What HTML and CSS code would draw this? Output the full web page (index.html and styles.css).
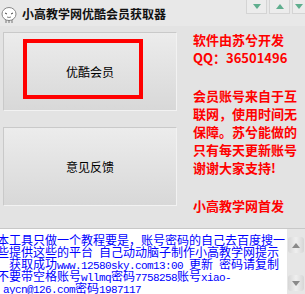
FILE: index.html
```html
<!DOCTYPE html>
<html>
<head>
<meta charset="utf-8">
<link rel="stylesheet" href="styles.css">
</head>
<body>
<div class="win">
  <div class="titlebar">
    <svg class="logo" width="18" height="18" viewBox="0 0 18 18">
      <ellipse cx="8" cy="8" rx="7" ry="6.5" fill="#fff" stroke="#888" stroke-width="1"/>
      <path d="M4 7 l2 1 M12 7 l-2 1" stroke="#444" stroke-width="1"/>
      <path d="M6 11 q2 1 4 0" stroke="#666" fill="none" stroke-width="0.8"/>
      <path d="M5 14 l0 3 M8 14 l0 3 M11 14 l0 3" stroke="#777" stroke-width="1"/>
    </svg>
    <span class="title">小高教学网优酷会员获取器</span>
    <div class="ctrls">
      <span class="ctrl"><svg width="8" height="5"><path d="M0 0 H8 L4 5 Z" fill="#5fae8e"/></svg></span>
      <span class="ctrl"><svg width="8" height="5"><path d="M0 5 H8 L4 0 Z" fill="#5fae8e"/></svg></span>
      <span class="ctrl last"><svg width="8" height="5"><path d="M0 0 H8 L4 5 Z" fill="#5fae8e"/></svg></span>
    </div>
  </div>
  <div class="main">
    <div class="left">
      <div class="btn">优酷会员<div class="focus"></div></div>
      <div class="btn">意见反馈</div>
    </div>
    <div class="info">
      <div>软件由苏兮开发</div>
      <div>QQ：36501496</div>
      <div class="gap"></div>
      <div>会员账号来自于互</div>
      <div>联网，使用时间无</div>
      <div>保障。苏兮能做的</div>
      <div>只有每天更新账号</div>
      <div>谢谢大家支持!</div>
      <div class="gap"></div>
      <div>小高教学网首发</div>
    </div>
  </div>
  <div class="memo">
    <div class="memo-text">
      <div class="row">本工具只做一个教程要是，账号密码的自己去百度搜一</div>
      <div class="row">些提供这些的平台<span class="l">&nbsp;</span>自己动动脑子制作小高教学网提示</div>
      <div class="row"><span class="l">&nbsp;&nbsp;</span>获取成功<span class="l">www.12580sky.com13:00&nbsp;</span>更新<span class="l">&nbsp;</span>密码请复制</div>
      <div class="row">不要带空格账号<span class="l">wllmq</span>密码<span class="l">7758258</span>账号<span class="l">xiao-</span></div>
      <div class="row"><span class="l">&nbsp;aycn@126.com</span>密码<span class="l">1987117</span></div>
    </div>
    <div class="sbar">
      <div class="sbtn"><svg width="8" height="5"><path d="M0 5 H8 L4 0 Z" fill="#8a8a8a"/></svg></div>
      <div class="sbtn"><svg width="8" height="5"><path d="M0 0 H8 L4 5 Z" fill="#8a8a8a"/></svg></div>
    </div>
  </div>
</div>
</body>
</html>
```

FILE: styles.css
```css
html, body {
  margin: 0;
  padding: 0;
}
body {
  width: 305px;
  height: 294px;
  overflow: hidden;
  background: #e3e3e3;
  font-family: "Noto Sans CJK SC", "Liberation Sans", sans-serif;
}
.win {
  display: flex;
  flex-direction: column;
  height: 294px;
}
.titlebar {
  height: 26px;
  flex: none;
  display: flex;
  align-items: center;
  background: #e8e8e8;
  position: relative;
}
.logo {
  margin-left: 1px;
  margin-top: 4px;
}
.title {
  margin-left: 3px;
  font-size: 12px;
  font-weight: bold;
  color: #111;
}
.ctrls {
  position: absolute;
  right: 0;
  top: 0;
  display: flex;
  gap: 2px;
}
.ctrl {
  width: 19px;
  height: 13px;
  border: 1px solid #d4d4d4;
  border-top: none;
  background: #ececec;
  display: flex;
  align-items: center;
  justify-content: center;
}
.ctrl.last {
  width: 12px;
  border-right: none;
}
.main {
  display: flex;
  height: 202px;
  flex: none;
}
.left {
  display: flex;
  flex-direction: column;
  gap: 16px;
  padding: 6px 0 0 3px;
}
.btn {
  position: relative;
  width: 172px;
  height: 77px;
  border: 1px solid #c9c9c9;
  border-bottom-color: #f2f2f2;
  border-right-color: #f2f2f2;
  background: linear-gradient(#ececec, #d8d8d8);
  display: flex;
  align-items: center;
  justify-content: center;
  font-size: 12px;
  color: #000;
}
.focus {
  position: absolute;
  left: 19px;
  top: 6px;
  width: 112px;
  height: 52px;
  border: 4px solid #ff0000;
}
.info {
  padding: 5px 0 0 16px;
  color: #ff0000;
  font-size: 13px;
  font-weight: bold;
  line-height: 18px;
  white-space: nowrap;
}
.gap {
  height: 20px;
}
.memo {
  flex: 1;
  display: flex;
  background: #fff;
  border-top: 1px solid #c8c8c8;
  overflow: hidden;
}
.memo-text {
  flex: 1;
  overflow: hidden;
  color: #0000ff;
  font-size: 12px;
  line-height: 12px;
  padding-top: 5px;
  white-space: nowrap;
  margin-left: -3px;
}
.row {
  height: 12px;
  line-height: 12px;
}
.l {
  font-family: "Liberation Mono", monospace;
  font-size: 11px;
  letter-spacing: -0.6px;
  line-height: 10px;
}
.sbar {
  width: 18px;
  flex: none;
  background: #e6e6e6;
  display: flex;
  flex-direction: column;
  justify-content: space-between;
  padding: 8px 0 3px;
}
.sbtn {
  height: 16px;
  margin: 0 1px;
  background: linear-gradient(90deg, #d6d6d6, #efefef, #d6d6d6);
  border-radius: 3px;
  display: flex;
  align-items: center;
  justify-content: center;
}
```
